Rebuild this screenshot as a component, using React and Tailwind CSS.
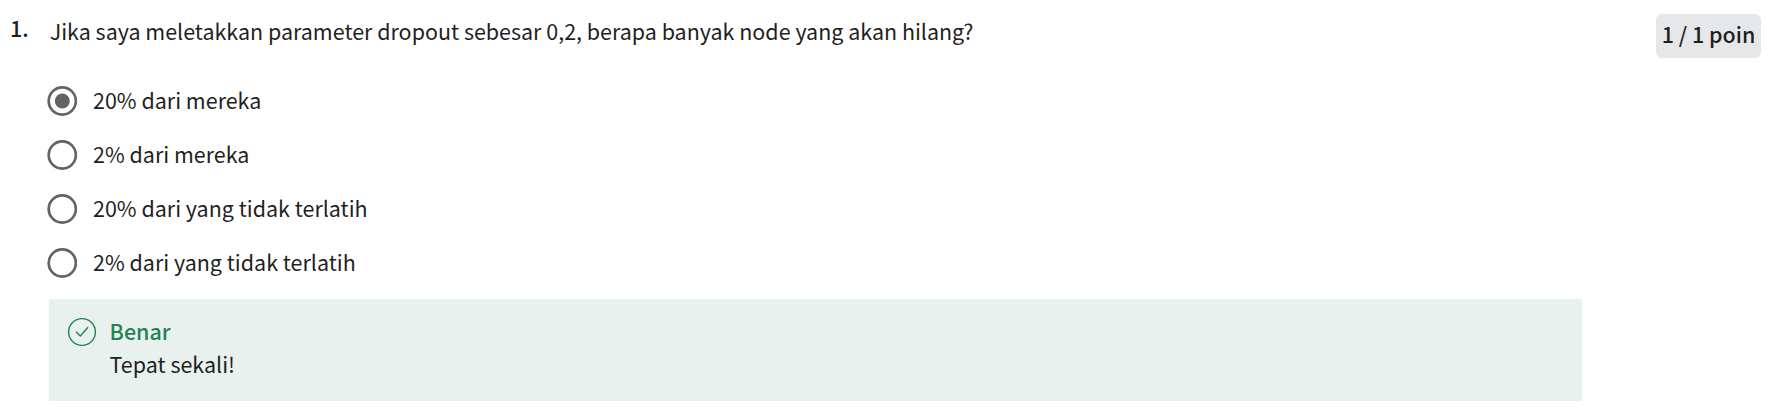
const OPTIONS = [
  "20% dari mereka",
  "2% dari mereka",
  "20% dari yang tidak terlatih",
  "2% dari yang tidak terlatih",
];

function Radio({ checked }) {
  return (
    <svg className="h-[30px] w-[30px] shrink-0" viewBox="0 0 30 30" fill="none">
      <circle cx="15.3" cy="15" r="13.6" stroke="#636363" strokeWidth="2.7" />
      {checked && <circle cx="15.3" cy="15" r="7.5" fill="#636363" />}
    </svg>
  );
}

export default function App() {
  return (
    <main className="flex h-[415px] w-[1772px] items-start bg-white font-['Noto_Sans_CJK_SC',sans-serif] text-[21.48px] leading-[33px] text-[#1f1f1f]">
      <div className="w-[39px] shrink-0 pt-[11px] pl-[10px] font-medium">1.</div>
      <section className="w-[1543px] pl-[10px]">
        <h1 className="pt-[14px] pl-[0.7px]">
          Jika saya meletakkan parameter dropout sebesar 0,2, berapa banyak node yang akan hilang?
        </h1>
        <div className="mt-[27px] -ml-[2px] flex flex-col">
          {OPTIONS.map((label, i) => (
            <label key={label} className="flex h-[54px] items-center gap-[16px]">
              <Radio checked={i === 0} />
              <span className="pb-[3px]">{label}</span>
            </label>
          ))}
        </div>
        <div className="mt-[9px] flex h-[102px] bg-[#e8f1ee] pt-[15px] pl-[17px]">
          <svg className="mt-[2px] h-[32px] w-[32px]" viewBox="0 0 32 32" fill="none" stroke="#1f8354" strokeWidth="1.4">
            <circle cx="16" cy="16" r="13.4" />
            <path d="M10 15.7l4.3 4.3 7.7-8.7" />
          </svg>
          <div className="ml-[11.6px]">
            <p className="font-medium text-[#1f8354]">Benar</p>
            <p>Tepat sekali!</p>
          </div>
        </div>
      </section>
      <div className="mt-[14px] mr-[11px] ml-auto flex h-[44px] w-[105px] items-center justify-center rounded-[6px] bg-[#e5e7e8] pb-[5px] font-medium">
        1 / 1 poin
      </div>
    </main>
  );
}
